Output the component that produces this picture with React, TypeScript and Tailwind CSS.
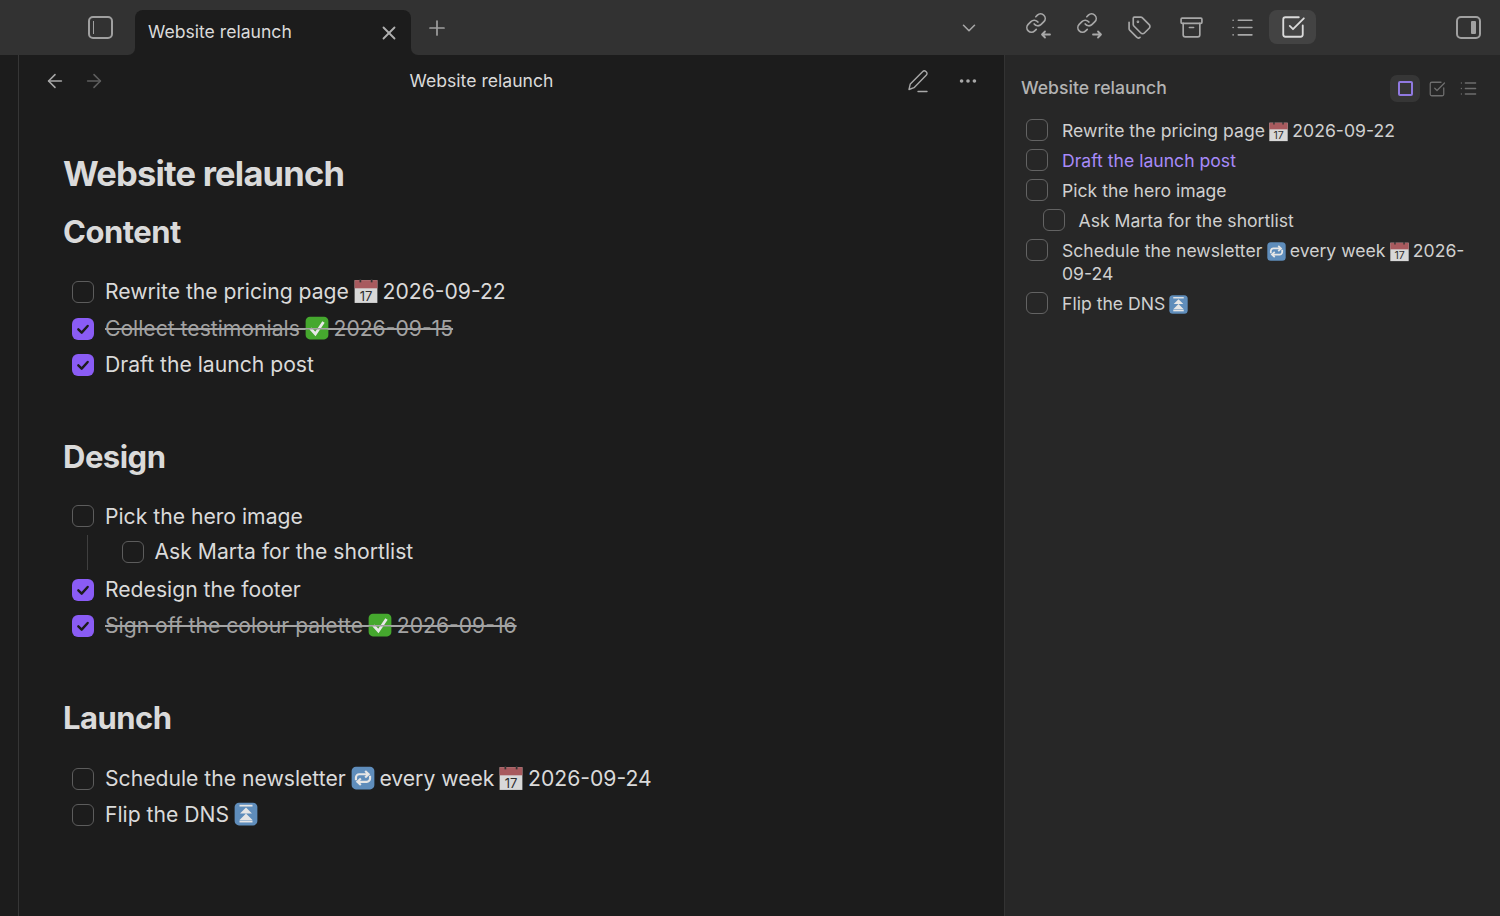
import { ArrowLeft, ArrowRight, Archive, ChevronDown, Ellipsis, List, Plus, SquareCheckBig, Tags, X } from 'lucide-react';
import type { ReactNode } from 'react';

function CalendarEmoji({ size = 26 }: { size?: number }) {
  return (
    <svg viewBox="0 0 24 24" width={size} height={size} className="inline align-[-5px] -mx-[0.1em]">
      <rect x="1.500" y="2" width="21" height="21" fill="#d8d8d8" />
      <rect x="1.500" y="2" width="21" height="7.500" fill="#a85a5e" />
      <rect x="6" y="1" width="1.600" height="3" fill="#333" />
      <rect x="16.400" y="1" width="1.600" height="3" fill="#333" />
      <text x="12" y="21" textAnchor="middle" fontSize="12" fontFamily="Inter, sans-serif" fill="#2f2f2f">17</text>
    </svg>
  );
}

// the strike line does not carry over an inline svg, so it is part of the drawing
function DoneEmoji({ size = 26 }: { size?: number }) {
  return (
    <svg viewBox="0 0 24 24" width={size} height={size} className="inline align-[-5px] -mx-[0.1em]">
      <rect x="1.500" y="1.500" width="21" height="21" rx="4" fill="#45a82e" />
      <path d="M6 12.500l4.500 5 7.500-11" fill="none" stroke="#e8e8e8" strokeWidth="2.600" />
      <rect x="0" y="12" width="24" height="1.400" fill="#a3a3a3" />
    </svg>
  );
}

function RepeatEmoji({ size = 26 }: { size?: number }) {
  return (
    <svg viewBox="0 0 24 24" width={size} height={size} className="inline align-[-5px] -mx-[0.1em]">
      <rect x="1.500" y="1.500" width="21" height="21" rx="4" fill="#5f8dbb" />
      <path d="M5.500 14v-2.500a3 3 0 0 1 3-3h8M14 5.500l3.200 3-3.200 3M18.500 10v2.500a3 3 0 0 1-3 3h-8M10 18.500l-3.200-3 3.200-3" fill="none" stroke="#e6e6e6" strokeWidth="2" />
    </svg>
  );
}

function TopEmoji({ size = 26 }: { size?: number }) {
  return (
    <svg viewBox="0 0 24 24" width={size} height={size} className="inline align-[-5px] -mx-[0.1em]">
      <rect x="1.500" y="1.500" width="21" height="21" rx="4" fill="#5f8dbb" />
      <path d="M12 6l5.500 5.500h-11zM12 11.500l6 6h-12z" fill="#e6e6e6" />
      <rect x="6" y="3.500" width="12" height="1.600" fill="#e6e6e6" />
      <rect x="6" y="18" width="12" height="1.800" fill="#e6e6e6" />
    </svg>
  );
}

function LinkIcon({ out }: { out?: boolean }) {
  return (
    <svg viewBox="0 0 24 24" width="24" height="24" fill="none" stroke="#a8a8a8" strokeWidth="1.800" strokeLinecap="round" strokeLinejoin="round" className="overflow-visible">
      <g transform="translate(-1 -3) scale(0.92)">
        <path d="M10 13a5 5 0 0 0 7.540.540l3-3a5 5 0 0 0-7.070-7.070l-1.720 1.710" />
        <path d="M14 11a5 5 0 0 0-7.540-.540l-3 3a5 5 0 0 0 7.070 7.070l1.710-1.710" />
      </g>
      {out ? <path d="M16 19.500h8M21 16.500l3 3-3 3" /> : <path d="M24 19.500h-8M19 16.500l-3 3 3 3" />}
    </svg>
  );
}

function PaneIcon({ right }: { right?: boolean }) {
  return (
    <div className="relative w-[25px] h-[23px] rounded-[5px] border-2 border-[#a0a0a0]">
      {right ? (
        <div className="absolute right-[3px] top-[3px] bottom-[3px] w-[5px] rounded-[1px] bg-[#a0a0a0]" />
      ) : (
        <div className="absolute left-[3px] top-[3px] bottom-[3px] w-px bg-[#a0a0a0]" />
      )}
    </div>
  );
}

function PenIcon() {
  return (
    <svg viewBox="0 0 24 24" width="24" height="24" fill="none" stroke="#a8a8a8" strokeWidth="1.400" strokeLinecap="round" strokeLinejoin="round">
      <path d="M2 20.500l1.300-5.600L15.800 2.400a2.100 2.100 0 0 1 3 0l.6.6a2.100 2.100 0 0 1 0 3L7 18.700z" />
      <path d="M13 23h9" transform="translate(-2 -0.500)" />
    </svg>
  );
}

function Box({ checked, small }: { checked?: boolean; small?: boolean }) {
  if (checked) {
    return (
      <div className="w-[22px] h-[22px] shrink-0 rounded-[6px] bg-[#8a5cf5] flex items-center justify-center">
        <svg viewBox="0 0 24 24" width="16" height="16" fill="none" stroke="#1c1c1c" strokeWidth="3.600" strokeLinecap="round" strokeLinejoin="round">
          <path d="M5 12.500l5 5 9-10" />
        </svg>
      </div>
    );
  }
  return <div className={`w-[22px] h-[22px] shrink-0 rounded-[6px] border-[1.500px] ${small ? 'border-[#636363]' : 'border-[#5c5c5c]'}`} />;
}

function Task({ checked, done, children, className }: { checked?: boolean; done?: boolean; children: ReactNode; className?: string }) {
  return (
    <div className={`flex items-center h-[36.400px] pl-[9px] ${className ?? ''}`}>
      <Box checked={checked} />
      <span className={`ml-[11px] whitespace-nowrap ${done ? 'text-[#a3a3a3] line-through' : 'text-[#dadada]'}`}>{children}</span>
    </div>
  );
}

function SideTask({ indent, link, children }: { indent?: boolean; link?: boolean; children: ReactNode }) {
  return (
    <div className={`flex items-start py-[3.500px] ${indent ? 'pl-[16.500px]' : ''}`}>
      <Box small />
      <span className={`ml-[14px] flex-1 leading-[23px] ${link ? 'text-[#a88bfa]' : 'text-[#d0d0d0]'}`}>{children}</span>
    </div>
  );
}

export default function App() {
  return (
    <div className="w-[1500px] h-[916px] flex flex-col overflow-hidden bg-[#1c1c1c] font-['Inter',sans-serif] text-[17.600px]">
      {/* title bar */}
      <div className="h-[55px] shrink-0 flex bg-[#323232]">
        <div className="w-[135px] flex items-center justify-end pr-[22px] pb-[1px]">
          <PaneIcon />
        </div>
        <div className="relative w-[276px] mt-[10px] rounded-t-[8px] bg-[#1c1c1c] flex items-center pl-[13px] pr-[11px] justify-between">
          <div className="absolute -left-[7px] bottom-0 w-[7px] h-[7px] bg-[#1c1c1c]">
            <div className="w-full h-full rounded-br-[7px] bg-[#323232]" />
          </div>
          <div className="absolute -right-[7px] bottom-0 w-[7px] h-[7px] bg-[#1c1c1c]">
            <div className="w-full h-full rounded-bl-[7px] bg-[#323232]" />
          </div>
          <span className="text-[#dadada]">Website relaunch</span>
          <X size={22} color="#b0b0b0" strokeWidth={2} />
        </div>
        <div className="ml-[14px] flex items-center">
          <Plus size={24} color="#a0a0a0" strokeWidth={1.700} />
        </div>
        <div className="ml-[509px] flex items-center">
          <ChevronDown size={22} color="#a8a8a8" strokeWidth={1.700} />
        </div>
        <div className="ml-[46px] flex items-center gap-[26.500px] pb-[1px]">
          <LinkIcon />
          <LinkIcon out />
          <Tags size={25} color="#a8a8a8" strokeWidth={1.600} />
          <Archive size={25} color="#a8a8a8" strokeWidth={1.600} />
          <List size={25} color="#a8a8a8" strokeWidth={1.600} />
        </div>
        <div className="ml-[14px] mt-[10px] w-[47px] h-[34px] rounded-[8px] bg-[#434343] flex items-center justify-center">
          <SquareCheckBig size={26} color="#dadada" strokeWidth={1.700} />
        </div>
        <div className="ml-[140px] flex items-center pb-[1px]">
          <PaneIcon right />
        </div>
      </div>

      <div className="flex-1 flex min-h-0">
        {/* ribbon */}
        <div className="w-[19px] shrink-0 border-r border-[#363636]" />

        {/* main note */}
        <div className="w-[986px] shrink-0 border-r border-[#333333] flex flex-col">
          <div className="h-[52px] flex items-center pl-[25px] pr-[25px]">
            <ArrowLeft size={22} color="#a8a8a8" strokeWidth={1.700} />
            <ArrowRight size={22} color="#5e5e5e" strokeWidth={1.700} className="ml-[17px]" />
            <div className="flex-1 text-center text-[#dadada] pr-[49px]">Website relaunch</div>
            <PenIcon />
            <Ellipsis size={22} color="#a8a8a8" strokeWidth={2} className="ml-[26px]" />
          </div>

          <div className="pl-[44px] text-[21.150px] text-[#dadada]">
            <h1 className="mt-[43px] h-[48px] leading-[48px] text-[34.500px] font-bold tracking-[-0.800px]">Website relaunch</h1>
            <h2 className="mt-[12px] h-[44px] leading-[44px] text-[31px] font-bold tracking-[-0.500px]">Content</h2>
            <div className="mt-[20px]">
              <Task>Rewrite the pricing page <CalendarEmoji /> 2026-09-22</Task>
              <Task checked done>Collect testimonials <DoneEmoji /> 2026-09-15</Task>
              <Task checked>Draft the launch post</Task>
            </div>
            <h2 className="mt-[52px] h-[44px] leading-[44px] text-[31px] font-bold tracking-[-0.500px]">Design</h2>
            <div className="mt-[19px]">
              <Task>Pick the hero image</Task>
              <div className="relative h-[35px] pl-[49.500px]">
                <div className="absolute left-[23.500px] top-0 bottom-0 w-px bg-[#3f3f3f]" />
                <Task className="!h-[35px]">Ask Marta for the shortlist</Task>
              </div>
              <div className="mt-[2px]">
                <Task checked>Redesign the footer</Task>
                <Task checked done>Sign off the colour palette <DoneEmoji /> 2026-09-16</Task>
              </div>
            </div>
            <h2 className="mt-[52px] h-[44px] leading-[44px] text-[31px] font-bold tracking-[-0.500px]">Launch</h2>
            <div className="mt-[20px]">
              <Task>Schedule the newsletter <RepeatEmoji /> every week <CalendarEmoji /> 2026-09-24</Task>
              <Task>Flip the DNS <TopEmoji /></Task>
            </div>
          </div>
        </div>

        {/* task sidebar */}
        <div className="flex-1 bg-[#272727]">
          <div className="h-[67px] flex items-center pl-[16px] pr-[22px]">
            <span className="flex-1 text-[#b3b3b3] font-medium">Website relaunch</span>
            <div className="w-[30px] h-[27px] rounded-[7px] bg-[#363636] flex items-center justify-center">
              <div className="w-[15px] h-[15px] rounded-[2px] border-2 border-[#9079e0]" />
            </div>
            <SquareCheckBig size={18} color="#6e6e6e" strokeWidth={1.700} className="ml-[8px]" />
            <List size={19} color="#6e6e6e" strokeWidth={1.700} className="ml-[13px]" />
          </div>
          <div className="pl-[21px] pr-[18px] -mt-[7px]">
            <SideTask>Rewrite the pricing page <CalendarEmoji size={21} /> 2026-09-22</SideTask>
            <SideTask link>Draft the launch post</SideTask>
            <SideTask>Pick the hero image</SideTask>
            <SideTask indent>Ask Marta for the shortlist</SideTask>
            <SideTask>Schedule the newsletter <RepeatEmoji size={21} /> every week <CalendarEmoji size={21} /> 2026-<wbr />09-24</SideTask>
            <SideTask>Flip the DNS <TopEmoji size={21} /></SideTask>
          </div>
        </div>
      </div>
    </div>
  );
}
